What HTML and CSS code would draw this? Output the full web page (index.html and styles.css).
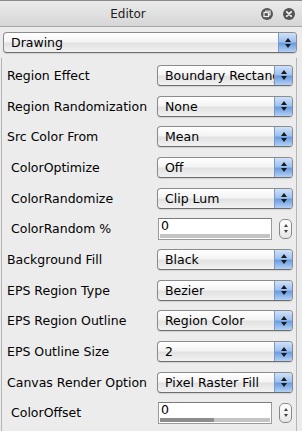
FILE: index.html
```html
<!DOCTYPE html>
<html>
<head>
<meta charset="utf-8">
<link rel="stylesheet" href="styles.css">
</head>
<body>
<div class="window">
  <div class="titlebar">
    <span class="title">Editor</span>
    <div class="tbtns">
      <svg class="tbtn" width="12" height="12" viewBox="0 0 12 12"><circle cx="6" cy="6" r="6" fill="#555"/><rect x="3" y="4.5" width="4.5" height="4" fill="none" stroke="#eee" stroke-width="1.2"/><path d="M4.8 4.5V3h4.2v3.8H7.5" fill="none" stroke="#eee" stroke-width="1.2"/></svg>
      <svg class="tbtn" width="12" height="12" viewBox="0 0 12 12"><circle cx="6" cy="6" r="6" fill="#555"/><path d="M3.8 3.8l4.4 4.4M8.2 3.8l-4.4 4.4" stroke="#eee" stroke-width="1.8" stroke-linecap="round"/></svg>
    </div>
  </div>
  <div class="top">
    <div class="popup wide"><span class="ptext">Drawing</span><span class="arrows"><i class="up"></i><i class="dn"></i></span></div>
  </div>
  <div class="scroll">
    <div class="row"><span class="lbl">Region Effect</span><div class="popup"><span class="ptext">Boundary Rectangle</span><span class="arrows"><i class="up"></i><i class="dn"></i></span></div></div>
    <div class="row"><span class="lbl">Region Randomization</span><div class="popup"><span class="ptext">None</span><span class="arrows"><i class="up"></i><i class="dn"></i></span></div></div>
    <div class="row"><span class="lbl">Src Color From</span><div class="popup"><span class="ptext">Mean</span><span class="arrows"><i class="up"></i><i class="dn"></i></span></div></div>
    <div class="row"><span class="lbl ind">ColorOptimize</span><div class="popup"><span class="ptext">Off</span><span class="arrows"><i class="up"></i><i class="dn"></i></span></div></div>
    <div class="row"><span class="lbl ind">ColorRandomize</span><div class="popup"><span class="ptext">Clip Lum</span><span class="arrows"><i class="up"></i><i class="dn"></i></span></div></div>
    <div class="row"><span class="lbl ind">ColorRandom %</span><div class="numwrap"><div class="field"><span class="ftext">0</span><div class="bar"></div></div><div class="stepper"><i class="up"></i><i class="dn"></i></div></div></div>
    <div class="row"><span class="lbl">Background Fill</span><div class="popup"><span class="ptext">Black</span><span class="arrows"><i class="up"></i><i class="dn"></i></span></div></div>
    <div class="row"><span class="lbl">EPS Region Type</span><div class="popup"><span class="ptext">Bezier</span><span class="arrows"><i class="up"></i><i class="dn"></i></span></div></div>
    <div class="row"><span class="lbl">EPS Region Outline</span><div class="popup"><span class="ptext">Region Color</span><span class="arrows"><i class="up"></i><i class="dn"></i></span></div></div>
    <div class="row"><span class="lbl">EPS Outline Size</span><div class="popup"><span class="ptext">2</span><span class="arrows"><i class="up"></i><i class="dn"></i></span></div></div>
    <div class="row"><span class="lbl">Canvas Render Option</span><div class="popup"><span class="ptext">Pixel Raster Fill</span><span class="arrows"><i class="up"></i><i class="dn"></i></span></div></div>
    <div class="row"><span class="lbl ind">ColorOffset</span><div class="numwrap"><div class="field"><span class="ftext">0</span><div class="bar"><div class="fill" style="width:49%"></div></div></div><div class="stepper"><i class="up"></i><i class="dn"></i></div></div></div>
  </div>
</div>
</body>
</html>
```
FILE: styles.css
```css
html, body {
  margin: 0;
  padding: 0;
  width: 302px;
  height: 431px;
  overflow: hidden;
  background: #e8e8e8;
  font-family: "DejaVu Sans", "Lucida Grande", sans-serif;
  font-size: 12px;
  color: #000;
}
.window {
  width: 302px;
  height: 431px;
  display: flex;
  flex-direction: column;
  background: #ececec;
}
.titlebar {
  height: 25px;
  flex: none;
  border-top: 1px solid #8a8a8a;
  border-bottom: 1px solid #a8a8a8;
  background: linear-gradient(#ebebeb, #d6d6d6);
  position: relative;
  display: flex;
  align-items: center;
  justify-content: center;
}
.title {
  font-size: 12px;
  color: #222;
  margin-left: -46px;
}
.tbtns {
  position: absolute;
  right: 7px;
  top: 7px;
  display: flex;
  gap: 10px;
}
.tbtn { display: block; }
.top {
  padding: 5px 5px 0 3px;
  flex: none;
}
.popup {
  height: 19px;
  width: 134px;
  border: 1px solid #8c8c8c;
  border-bottom-color: #6e6e6e;
  border-radius: 4px;
  background: linear-gradient(#ffffff 0%, #f4f4f4 45%, #e2e2e2 55%, #f2f2f2 100%);
  display: flex;
  align-items: center;
  overflow: hidden;
  box-shadow: 0 1px 1px rgba(0,0,0,0.12);
}
.popup.wide { width: 292px; }
.ptext {
  flex: 1;
  padding-left: 7px;
  white-space: nowrap;
  overflow: hidden;
  font-size: 12.5px;
  line-height: 19px;
}
.arrows {
  width: 17px;
  height: 19px;
  flex: none;
  border-left: 1px solid #7c9ac4;
  background: linear-gradient(#cfe1f9 0%, #9fc2f0 45%, #6c9de0 55%, #b3d1f6 100%);
  display: flex;
  flex-direction: column;
  align-items: center;
  justify-content: center;
  gap: 2px;
}
.up, .dn {
  display: block;
  width: 0;
  height: 0;
  border-left: 3px solid transparent;
  border-right: 3px solid transparent;
}
.up { border-bottom: 4px solid #1a1a1a; }
.dn { border-top: 4px solid #1a1a1a; }
.scroll {
  flex: 1;
  margin-top: 5px;
  border-left: 1px solid #b4b4b4;
  border-right: 1px solid #b4b4b4;
  width: 294px;
  margin-left: 1px;
  display: grid;
  grid-auto-rows: 30.7px;
  align-content: start;
  padding-top: 2px;
}
.row {
  display: flex;
  align-items: center;
  justify-content: space-between;
  padding: 0 3px 0 5px;
}
.lbl {
  white-space: nowrap;
  font-size: 12.5px;
}
.lbl.ind { padding-left: 4px; }
.numwrap {
  width: 136px;
  display: flex;
  align-items: center;
  justify-content: space-between;
}
.field {
  width: 112px;
  height: 20px;
  border: 1px solid #9a9a9a;
  border-top-color: #7a7a7a;
  background: #fff;
  display: flex;
  flex-direction: column;
  justify-content: space-between;
  margin-left: 1px;
}
.ftext {
  padding-left: 2px;
  line-height: 14px;
  font-size: 12.5px;
}
.bar {
  height: 4px;
  background: #c4c4c4;
  margin: 0 1px 1px 1px;
}
.fill {
  height: 100%;
  background: #8c8c8c;
}
.stepper {
  width: 11px;
  height: 18px;
  border: 1px solid #888;
  border-radius: 5px;
  background: linear-gradient(#fff, #e6e6e6);
  display: flex;
  flex-direction: column;
  align-items: center;
  justify-content: center;
  gap: 3px;
  margin-right: 1px;
}
.stepper .up { border-bottom-width: 3px; border-left-width: 2.5px; border-right-width: 2.5px; border-bottom-color: #444; }
.stepper .dn { border-top-width: 3px; border-left-width: 2.5px; border-right-width: 2.5px; border-top-color: #444; }
```
